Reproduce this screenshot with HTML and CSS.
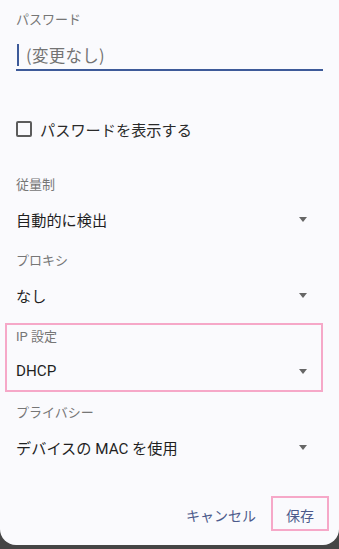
FILE: index.html
```html
<!DOCTYPE html>
<html lang="ja">
<head>
<meta charset="utf-8">
<link rel="stylesheet" href="styles.css">
</head>
<body>
<div class="dialog">
  <div class="pw-label">パスワード</div>
  <div class="pw-input"><span class="caret"></span><span class="placeholder">(変更なし)</span></div>
  <label class="check-row"><span class="checkbox"></span><span class="check-text">パスワードを表示する</span></label>
  <div class="fields">
    <div class="field">
      <div class="f-label">従量制</div>
      <div class="f-value"><span>自動的に検出</span><span class="arrow"></span></div>
    </div>
    <div class="field">
      <div class="f-label">プロキシ</div>
      <div class="f-value"><span>なし</span><span class="arrow"></span></div>
    </div>
    <div class="field hl hl-field">
      <div class="f-label">IP 設定</div>
      <div class="f-value"><span>DHCP</span><span class="arrow"></span></div>
    </div>
    <div class="field">
      <div class="f-label">プライバシー</div>
      <div class="f-value"><span>デバイスの MAC を使用</span><span class="arrow"></span></div>
    </div>
  </div>
  <div class="actions">
    <span class="btn">キャンセル</span>
    <span class="btn hl">保存</span>
  </div>
</div>
</body>
</html>
```
FILE: styles.css
```css
html, body {
  margin: 0;
  padding: 0;
}
body {
  width: 339px;
  height: 549px;
  overflow: hidden;
  background: #454545;
  font-family: Roboto, "Noto Sans CJK JP", sans-serif;
}
.dialog {
  box-sizing: border-box;
  height: 545px;
  padding: 12px 16px 0;
  background: #fafafd;
  border-radius: 0 0 16px 16px;
}
.pw-label {
  font-size: 13px;
  line-height: 16px;
  color: #767676;
}
.pw-input {
  margin-top: 12px;
  height: 29px;
  border-bottom: 2px solid #3d5a99;
  display: flex;
  align-items: center;
}
.caret {
  width: 2px;
  height: 22px;
  margin-left: 1px;
  background: #3d5a99;
}
.placeholder {
  margin-left: 7px;
  font-family: "Noto Sans CJK JP", sans-serif;
  font-size: 16.5px;
  letter-spacing: 0.3px;
  color: #737373;
}
.check-row {
  margin-top: 46px;
  height: 24px;
  display: flex;
  align-items: center;
}
.checkbox {
  box-sizing: border-box;
  width: 16px;
  height: 16px;
  border: 2px solid #5c5c5c;
  border-radius: 2px;
}
.check-text {
  margin-left: 8px;
  font-size: 15.2px;
  color: #2a2a2a;
}
.fields {
  margin-top: 34px;
  display: flex;
  flex-direction: column;
  gap: 14px;
}
.field {
  height: 62px;
}
.f-label {
  font-size: 13px;
  line-height: 20px;
  color: #767676;
}
.f-value {
  margin-top: 6px;
  height: 36px;
  display: flex;
  align-items: center;
  justify-content: space-between;
  font-size: 15.2px;
  color: #1f1f1f;
}
.arrow {
  width: 0;
  height: 0;
  margin-right: 16px;
  border-left: 4.5px solid transparent;
  border-right: 4.5px solid transparent;
  border-top: 5px solid #666666;
}
.actions {
  margin-top: 31px;
  margin-right: -6px;
  display: flex;
  justify-content: flex-end;
}
.btn {
  box-sizing: border-box;
  height: 35px;
  padding: 6px 15px 0;
  line-height: 29px;
  font-size: 14px;
  color: #4c5a8c;
}
.hl {
  position: relative;
}
.hl::after {
  content: "";
  position: absolute;
  inset: 0;
  border: 2px solid #f6a8c8;
  pointer-events: none;
}
.hl-field::after {
  top: -4px;
  bottom: -3px;
  left: -11px;
  right: 0;
}
```
